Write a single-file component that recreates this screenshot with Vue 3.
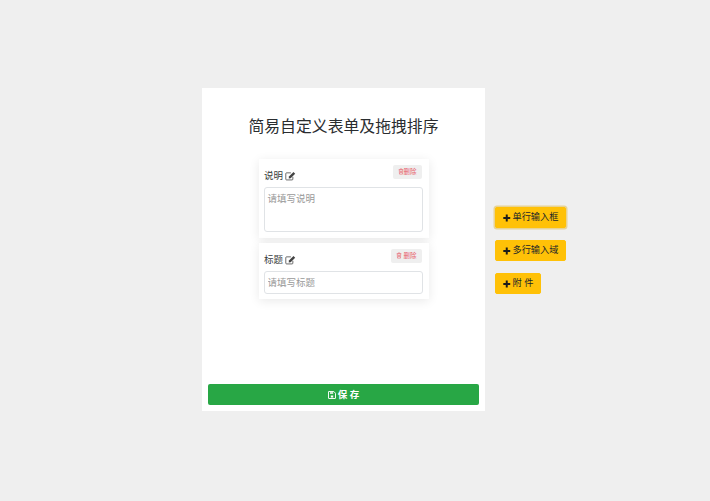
<script setup>
const fields = [
  { id: 1, label: '说明', placeholder: '请填写说明', tall: true, del: '删除', tight: true },
  { id: 2, label: '标题', placeholder: '请填写标题', tall: false, del: '删除', tight: false },
]
const tools = [
  { label: '单行输入框', focus: true },
  { label: '多行输入域', focus: false },
  { label: '附 件', focus: false },
]
</script>

<template>
  <div class="page">
    <main class="panel">
      <h1 class="title">简易自定义表单及拖拽排序</h1>
      <div class="list">
        <section v-for="f in fields" :key="f.id" class="card" :class="{ 'card-tall': f.tall }">
          <div class="head">
            <span class="label">{{ f.label }}</span>
            <svg class="edit" viewBox="0 0 14 12" width="11" height="10">
              <path d="M10 7v3a1 1 0 0 1-1 1H2a1 1 0 0 1-1-1V3a1 1 0 0 1 1-1h5.500" fill="none" stroke="#444" stroke-width="1" />
              <path d="M5 6.500 10.800.8l2.200 2.200L7.200 8.800 4.700 9.200z" fill="#444" />
            </svg>
            <button class="del" :class="{ 'del-tight': f.tight }" type="button">
              <svg class="trash" viewBox="0 0 8 9" width="6" height="7">
                <path d="M1 2h6M3 2V1h2v1M1.700 2l.3 6h4l.3-6M3.300 3.500v3M4.700 3.500v3" fill="none" stroke="#e8626c" stroke-width=".8" />
              </svg>
              <span>{{ f.del }}</span>
            </button>
          </div>
          <textarea v-if="f.tall" class="control area" :placeholder="f.placeholder"></textarea>
          <input v-else class="control line" :placeholder="f.placeholder" />
        </section>
      </div>
      <button class="save" type="button">
        <svg viewBox="0 0 10 10" width="8" height="8">
          <path d="M1 .6h6.200L9.400 2.800V9a.4.4 0 0 1-.4.4H1A.4.4 0 0 1 .6 9V1A.4.4 0 0 1 1 .6z" fill="none" stroke="#fff" stroke-width="1.200" />
          <path d="M2.500 1.500h4v2h-4zM3.500 5.500h3v2.500h-3z" fill="#fff" />
        </svg>
        <span>保 存</span>
      </button>
    </main>
    <aside class="tools">
      <button v-for="t in tools" :key="t.label" class="tool" :class="{ focus: t.focus }" type="button">
        <svg viewBox="0 0 8 8" width="7.500" height="8">
          <path d="M4 .3v7.400M.3 4h7.400" stroke="#1b1b1b" stroke-width="2.100" fill="none" />
        </svg>
        <span>{{ t.label }}</span>
      </button>
    </aside>
  </div>
</template>

<style>
html, body { margin: 0; background: #efefef; }
</style>

<style scoped>
.page {
  width: 710px;
  height: 501px;
  box-sizing: border-box;
  padding: 88px 0 0 202px;
  display: flex;
  align-items: flex-start;
  gap: 10px;
  background: #efefef;
  font-family: "Liberation Sans", "Noto Sans CJK SC", sans-serif;
}
.panel {
  width: 283px;
  height: 323px;
  box-sizing: border-box;
  padding: 28px 6px 6px;
  background: #fff;
  display: flex;
  flex-direction: column;
}
.title {
  margin: 0;
  height: 22px;
  font-size: 15.850px;
  line-height: 22px;
  font-weight: 400;
  color: #2a2d30;
  text-align: center;
}
.list {
  margin-top: 21px;
  flex: 1;
  display: flex;
  flex-direction: column;
  align-items: center;
  gap: 5px;
}
.card {
  width: 170px;
  height: 56px;
  box-sizing: border-box;
  padding: 6px 6px 5px 5px;
  background: #fff;
  box-shadow: 0 2px 10px rgba(0, 0, 0, .09);
  display: flex;
  flex-direction: column;
  justify-content: flex-end;
}
.card-tall { height: 79px; padding-bottom: 6px; }
.head {
  flex: 1;
  display: flex;
  align-items: center;
  font-size: 9.500px;
  color: #3a3d40;
  position: relative;
}
.label { line-height: 12px; padding-left: .5px; }
.edit { margin-left: 2px; }
.del {
  position: absolute;
  top: 0;
  right: 1px;
  height: 13.500px;
  padding: 0 5px;
  border: 0;
  border-radius: 2px;
  background: #efefef;
  color: #e8626c;
  font: 6.500px/13px "Liberation Sans", "Noto Sans CJK SC", sans-serif;
  display: flex;
  align-items: center;
  gap: 2px;
}
.del-tight { gap: 0; }
.control {
  display: block;
  width: 159px;
  box-sizing: border-box;
  border: 1px solid #e0e3e6;
  border-radius: 3px;
  padding: 4px 3px;
  font: 9.500px/13px "Liberation Sans", "Noto Sans CJK SC", sans-serif;
  background: #fff;
  outline: none;
  resize: none;
  margin: 0;
}
.control::placeholder { color: #999; opacity: 1; }
.area { height: 45px; }
.line { height: 23px; }
.save {
  width: 271px;
  height: 21px;
  padding: 0;
  border: 0;
  border-radius: 2px;
  background: #28a745;
  color: #fff;
  font: 700 9.500px/21px "Liberation Sans", "Noto Sans CJK SC", sans-serif;
  display: flex;
  align-items: center;
  justify-content: center;
  gap: 2px;
}
.tools {
  margin-top: 119px;
  display: flex;
  flex-direction: column;
  align-items: flex-start;
  gap: 12px;
}
.tool {
  height: 21px;
  padding: 0 7px;
  border: 1px solid #ffc107;
  border-radius: 2px;
  background: #ffc107;
  color: #212529;
  font: 9.200px/19px "Liberation Sans", "Noto Sans CJK SC", sans-serif;
  display: flex;
  align-items: center;
  gap: 2px;
}
.focus { box-shadow: 0 0 0 1.500px rgba(222, 170, 12, .4); }
</style>
